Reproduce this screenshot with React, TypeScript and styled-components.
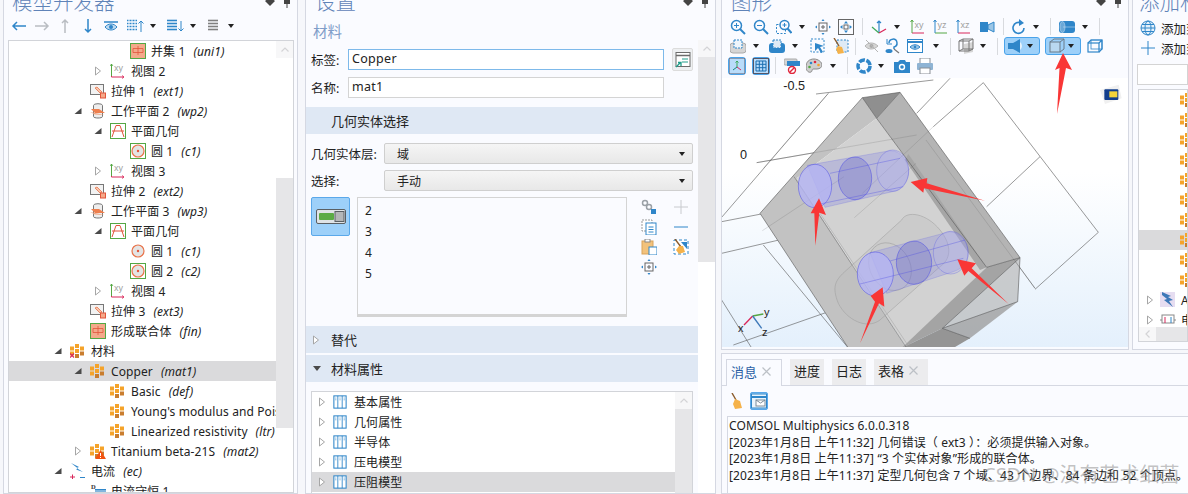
import React from 'react'
import styled, { createGlobalStyle } from 'styled-components'

const GlobalStyle = createGlobalStyle`
  html, body {
    margin: 0;
    padding: 0;
    background: #f6f7fb;
    overflow: hidden;
  }
  * { box-sizing: border-box; }
`

const blue = '#2f86c9'
const grey = '#8a8f96'
const uiFont = `"Noto Sans", "Noto Sans CJK SC", sans-serif`

const Page = styled.div`
  width: 1188px;
  height: 494px;
  padding-left: 3px;
  display: grid;
  grid-template-columns: 295px 411px 1fr;
  column-gap: 7px;
  font-family: ${uiFont};
  font-size: 12px;
  color: #222;
  overflow: hidden;
`
const Panel = styled.section`
  position: relative;
  min-width: 0;
  background: #fafbff;
  border: 1px solid #d5d8e2;
  border-top: none;
  display: flex;
  flex-direction: column;
  overflow: hidden;
`
const TitleBar = styled.div<{ $left: number }>`
  height: 16px;
  flex: none;
  padding: 0 6px 0 ${(p) => p.$left}px;
  display: flex;
  align-items: flex-end;
  justify-content: space-between;
`
const Title = styled.div`
  font-size: 20.5px;
  line-height: 28px;
  color: #5f83b8;
  white-space: nowrap;
  font-weight: 300;
`
const PinBox = styled.div`
  display: flex;
  gap: 8px;
  height: 14px;
  align-self: flex-start;
`

function Pins() {
  return (
    <PinBox>
      <svg width="10" height="6" viewBox="0 0 10 6">
        <path d="M0 1 L5 6 L10 1 L5 -3Z" fill="#444" />
      </svg>
      <svg width="8" height="8" viewBox="0 0 8 8">
        <path d="M1 0h6v4H1zM3.500 4h1v4h-1z" fill="#444" />
      </svg>
    </PinBox>
  )
}

// ---------- icons ----------
const Ico = styled.svg`
  flex: none;
  display: block;
`
function I({ s = 16, children }: { s?: number; children: React.ReactNode }) {
  return (
    <Ico width={s} height={s} viewBox="0 0 16 16" fill="none">
      {children}
    </Ico>
  )
}

const CaretOpen = () => (
  <svg width="8" height="10" viewBox="0 0 8 10">
    <path d="M1.500 1 L6.500 5 L1.500 9Z" fill="#fff" stroke="#a6a6a6" />
  </svg>
)
const CaretDown = () => (
  <svg width="8" height="8" viewBox="0 0 8 8">
    <path d="M7.500 1 V7 H0.500Z" fill="#4a4a4a" />
  </svg>
)

const MatBlocks = () => (
  <g>
    <path d="M5 1h4v4H5zM0 3.500h4v4H0zM10 3.500h4v4h-4zM0 8.500h4v4H0zM5 6h4v4H5z" fill="#f5a32a" />
    <path d="M10 8.500h4v4h-4zM5 11h4v4H5z" fill="#c97d2e" />
  </g>
)
const IconMat = () => (
  <I>
    <MatBlocks />
  </I>
)
const IconMatX = () => (
  <I>
    <MatBlocks />
    <path d="M0 10.500l4 4M4 10.500l-4 4" stroke="#d9275a" strokeWidth="1.200" />
  </I>
)
const IconMatWarn = () => (
  <I>
    <MatBlocks />
    <path d="M10.500 7 L16 16 H5Z" fill="#f2520f" />
    <path d="M10.500 10v3M10.500 14v1" stroke="#fff" />
  </I>
)
const IconUnion = () => (
  <I>
    <rect x=".5" y=".5" width="15" height="15" fill="#f4a98a" stroke="#55a744" />
    <path d="M3 5.500h10v4H3zM8 3v9" stroke="#e2553a" strokeWidth=".8" />
  </I>
)
const IconView = () => (
  <I>
    <path d="M1.500 13v1H14" stroke="#d9275a" />
    <path d="M1.500 1v12" stroke="#55a744" />
    <path d="M0 3l1.500-2L3 3" stroke="#55a744" strokeWidth=".8" />
    <path d="M12 12.500l2 1.500-2 1.500" stroke="#d9275a" strokeWidth=".8" />
    <text x="4" y="8" fontSize="9" fill="#a0a0a0" fontFamily="Liberation Sans">
      xy
    </text>
  </I>
)
const IconExtrude = () => (
  <I>
    <rect x=".5" y="1.500" width="13" height="10" fill="#f2f2f2" stroke="#777" />
    <path d="M5 5 L10 10 L12 9 L7 4Z" fill="#f6c6ae" stroke="#e8734a" strokeWidth=".8" />
    <rect x="10.500" y="10" width="5" height="5" fill="#f4a98a" stroke="#e2553a" />
  </I>
)
const IconPlane = () => (
  <I>
    <ellipse cx="8" cy="2.500" rx="4.500" ry="1.800" fill="#eee" stroke="#777" />
    <path d="M3.500 2.500v11c0 2 9 2 9 0v-11" fill="#eee" stroke="#777" />
    <path d="M1 6h8l6 4H5Z" fill="#ee7f4e" />
    <path d="M0 9l10 2 4 1-9-.5Z" fill="#f2a47f" />
  </I>
)
const IconGeom = () => (
  <I>
    <rect x=".5" y=".5" width="15" height="15" fill="#fff" stroke="#55a744" />
    <path d="M2 14 L6 2.500h4L14 14M2 8h12" stroke="#e2553a" strokeWidth="1" />
  </I>
)
const IconCircleBare = () => (
  <I>
    <circle cx="8" cy="8" r="6" fill="#e4e4e4" stroke="#e8734a" strokeWidth="1.200" />
    <circle cx="8" cy="8" r="1.200" fill="#e2553a" />
  </I>
)
const IconCircle = () => (
  <I>
    <rect x=".5" y=".5" width="15" height="15" fill="#fff" stroke="#55a744" />
    <circle cx="8" cy="8" r="6" fill="#e4e4e4" stroke="#e8734a" strokeWidth="1.200" />
    <circle cx="8" cy="8" r="1.200" fill="#e2553a" />
  </I>
)
const IconEc = () => (
  <I>
    <path d="M1 0 L9 4 L6.500 5 L13 9 L6 6.500 L8 5.500Z" fill={blue} />
    <path d="M0 14h5M2.500 11.500v5" stroke="#d9275a" />
    <path d="M10 14.500h5" stroke={blue} />
  </I>
)
const IconCons = () => (
  <I>
    <path d="M5 6h11v10H0v-7h5Z" fill={blue} />
    <path d="M0 8h16" stroke="#fff" strokeWidth=".8" />
    <text x="1" y="6" fontSize="6.500" fontWeight="700" fill="#333" fontFamily="Liberation Serif">
      D
    </text>
  </I>
)
const IconTable = () => (
  <I s={14}>
    <rect x="1" y="1" width="14" height="14" fill="#fff" stroke={blue} strokeWidth="1.200" />
    <path d="M5.500 1v14M10.500 1v14" stroke={blue} />
    <path d="M3.200 3v3M8 3v3M12.800 3v3" stroke={blue} strokeDasharray="1 1" />
  </I>
)
const IconArrowBolt = () => (
  <I>
    <rect x="0" y="0" width="15" height="15" fill="#e6ddf1" />
    <path d="M2 0 L11 4 L8 5 L13 8 L9 9 L13 15 L4 8 L7 7 L2 3Z" fill="#3d78b8" />
  </I>
)
const IconDevice = () => (
  <I>
    <rect x="2" y="3" width="12" height="8" fill="#fff" stroke="#888" />
    <path d="M0 8h2M14 8h2" stroke="#888" />
    <path d="M5 5v6" stroke="#d9275a" />
    <path d="M11 5v6" stroke={blue} />
  </I>
)

// ---------- tree ----------
const TreeBox = styled.div`
  flex: 1;
  margin: 4px 3px 0 4px;
  min-height: 0;
  background: #fff;
  border: 1px solid #d2d4d9;
  display: flex;
  overflow: hidden;
`
const TreeRows = styled.div`
  flex: 1;
  min-width: 0;
  overflow: hidden;
`
const Row = styled.div<{ $selected?: boolean; $left: number }>`
  height: 20px;
  padding-left: ${(p) => p.$left}px;
  background: ${(p) => (p.$selected ? '#dadadc' : 'transparent')};
  display: flex;
  align-items: center;
  white-space: nowrap;
  overflow: hidden;
  letter-spacing: 0.1px;
`
const CaretSlot = styled.span<{ $w: number }>`
  flex: none;
  width: ${(p) => p.$w}px;
  display: flex;
  align-items: center;
`
const IconSlot = styled.span`
  flex: none;
  width: 21px;
`
const Tag = styled.i`
  margin-left: 8px;
`
const ScrollV = styled.div<{ $thumbTop: number; $thumbH: number }>`
  flex: none;
  width: 17px;
  background: linear-gradient(
    #fff ${(p) => p.$thumbTop}px,
    #e6e6e8 ${(p) => p.$thumbTop}px,
    #e6e6e8 ${(p) => p.$thumbTop + p.$thumbH}px,
    #fff ${(p) => p.$thumbTop + p.$thumbH}px
  );
`
const ScrollUp = styled.div`
  height: 17px;
  background: #f7f7f8;
  display: grid;
  place-items: center;
`
const Chevron = () => (
  <svg width="8" height="5" viewBox="0 0 8 5">
    <path d="M.5 4.500 L4 1 L7.500 4.500" fill="none" stroke="#d4d4d6" strokeWidth="1.200" />
  </svg>
)

type Node = {
  level: number
  caret?: 'open' | 'down'
  icon: React.ReactNode
  label: string
  tag?: string
  selected?: boolean
}
const modelTree: Node[] = [
  { level: 3, icon: <IconUnion />, label: '并集 1', tag: '(uni1)' },
  { level: 2, caret: 'open', icon: <IconView />, label: '视图 2' },
  { level: 1, icon: <IconExtrude />, label: '拉伸 1', tag: '(ext1)' },
  { level: 1, caret: 'down', icon: <IconPlane />, label: '工作平面 2', tag: '(wp2)' },
  { level: 2, caret: 'down', icon: <IconGeom />, label: '平面几何' },
  { level: 3, icon: <IconCircle />, label: '圆 1', tag: '(c1)' },
  { level: 2, caret: 'open', icon: <IconView />, label: '视图 3' },
  { level: 1, icon: <IconExtrude />, label: '拉伸 2', tag: '(ext2)' },
  { level: 1, caret: 'down', icon: <IconPlane />, label: '工作平面 3', tag: '(wp3)' },
  { level: 2, caret: 'down', icon: <IconGeom />, label: '平面几何' },
  { level: 3, icon: <IconCircleBare />, label: '圆 1', tag: '(c1)' },
  { level: 3, icon: <IconCircle />, label: '圆 2', tag: '(c2)' },
  { level: 2, caret: 'open', icon: <IconView />, label: '视图 4' },
  { level: 1, icon: <IconExtrude />, label: '拉伸 3', tag: '(ext3)' },
  { level: 1, icon: <IconUnion />, label: '形成联合体', tag: '(fin)' },
  { level: 0, caret: 'down', icon: <IconMatX />, label: '材料' },
  { level: 1, caret: 'down', icon: <IconMat />, label: 'Copper', tag: '(mat1)', selected: true },
  { level: 2, icon: <IconMat />, label: 'Basic', tag: '(def)' },
  { level: 2, icon: <IconMat />, label: "Young's modulus and Poisson's ratio", tag: '(enu)' },
  { level: 2, icon: <IconMat />, label: 'Linearized resistivity', tag: '(ltr)' },
  { level: 1, caret: 'open', icon: <IconMatWarn />, label: 'Titanium beta-21S', tag: '(mat2)' },
  { level: 0, caret: 'down', icon: <IconEc />, label: '电流', tag: '(ec)' },
  { level: 1, icon: <IconCons />, label: '电流守恒 1' },
]

// ---------- toolbars ----------
const ToolRow = styled.div<{ $pad: number; $h?: number }>`
  flex: none;
  height: ${(p) => p.$h ?? 19.5}px;
  padding-left: ${(p) => p.$pad}px;
  display: flex;
  align-items: center;
`
const Tool = styled.span<{ $w?: number; $active?: boolean; $end?: boolean; $ml?: number }>`
  flex: none;
  width: ${(p) => p.$w ?? 23}px;
  height: 18px;
  margin-left: ${(p) => p.$ml ?? 0}px;
  display: flex;
  align-items: center;
  justify-content: ${(p) => (p.$end ? 'flex-end' : 'center')};
  ${(p) => p.$active && `background:#9dd0f9;border:1px solid #4aa3ea;border-radius:3px;`}
`
const Sep = styled.span`
  flex: none;
  width: 1px;
  height: 17px;
  margin: 0 5.500px 0 4.500px;
  background: #d8dade;
`
const Drop = styled.span`
  flex: none;
  width: 0;
  height: 0;
  border: 3.500px solid transparent;
  border-top: 4px solid #222;
  border-bottom: none;
  margin: 0 6.500px 0 3.500px;
`
const DropEnd = styled(Drop)`
  margin: 0 3px 0 3px;
`

const Ar = ({ d, c }: { d: string; c: string }) => (
  <I>
    <path d={d} stroke={c} strokeWidth="1.500" />
  </I>
)
const IconEye = () => (
  <I>
    <path d="M1 4h14" stroke={blue} strokeWidth="1.500" />
    <path d="M2 9c3-4 9-4 12 0-3 4-9 4-12 0Z" fill="#bcd9f0" stroke={blue} />
    <circle cx="8" cy="9" r="2" fill={blue} />
  </I>
)
const ListIcon = ({ dir, c = blue, dash }: { dir?: 'up' | 'down'; c?: string; dash?: boolean }) => (
  <Ico width={dir ? 20 : 12} height="14" viewBox={dir ? '0 0 20 14' : '0 0 12 14'} fill="none">
    {[1.500, 4.500, 7.500, 10.500].map((y) => (
      <path key={y} d={`M1 ${y}h10`} stroke={c} strokeWidth="1.600" strokeDasharray={dash ? '1 .5' : undefined} />
    ))}
    {dir === 'up' && <path d="M15 13V2M12.500 4.500 15 2l2.500 2.500" stroke={blue} />}
    {dir === 'down' && <path d="M15 2v10M12.500 9.500 15 12l2.500-2.500" stroke={blue} />}
  </Ico>
)

const Lens = ({ sign }: { sign: '+' | '-' }) => (
  <I>
    <circle cx="6.500" cy="6.500" r="5" stroke={blue} strokeWidth="1.500" />
    <path d="M10 10l5 5" stroke={blue} strokeWidth="2" />
    <path d={sign === '+' ? 'M4 6.500h5M6.500 4v5' : 'M4 6.500h5'} stroke={blue} />
  </I>
)
const LensBox = () => (
  <I>
    <rect x=".5" y="5.500" width="9" height="9" stroke={blue} strokeDasharray="2 1.500" />
    <circle cx="8.500" cy="6" r="4.500" fill="#fafbff" stroke={blue} strokeWidth="1.500" />
    <path d="M11.500 9.500l4 4.500" stroke={blue} strokeWidth="2" />
    <path d="M6.500 6h4M8.500 4v4" stroke={blue} />
  </I>
)
const IconZoomSel = () => (
  <I>
    <rect x="4" y="4" width="8" height="8" stroke="#666" />
    <path d="M8 6v4M6 8h4" stroke="#666" />
    <path d="M8 0l-1.500 2h3ZM8 16l-1.500-2h3ZM0 8l2-1.500v3ZM16 8l-2-1.500v3Z" fill={blue} />
  </I>
)
const IconExtents = () => (
  <I>
    <rect x=".5" y=".5" width="15" height="15" stroke="#666" />
    <rect x="6" y="6" width="4" height="4" stroke="#666" />
    <path d="M8 2l-2 2.500h4ZM8 14l-2-2.500h4ZM2 8l2.500-2v4ZM14 8l-2.500-2v4Z" fill={blue} />
  </I>
)
const IconAxes = () => (
  <I>
    <path d="M8 14V2M6 4l2-2 2 2" stroke={blue} strokeWidth="1.200" />
    <path d="M8 14L1 8" stroke="#3da85a" strokeWidth="1.200" />
    <path d="M8 14l7-4" stroke="#d9275a" strokeWidth="1.200" />
  </I>
)
const IconPlaneAxes = ({ txt, c, up }: { txt: string; c: string; up: string }) => (
  <I>
    <path d="M2 14h12" stroke={c} />
    <path d="M2 1v13M.5 3 2 1l1.500 2" stroke={up} />
    <text x="4.500" y="9" fontSize="9" fill="#a0a0a0" fontFamily="Liberation Sans">
      {txt}
    </text>
  </I>
)
const IconCam = () => (
  <I>
    <rect x="1" y="3" width="8" height="10" fill={blue} />
    <path d="M9 6l6-3v10l-6-3Z" fill="#9cc6e6" stroke={blue} />
  </I>
)
const IconRotate = () => (
  <I>
    <path d="M13 9a5.500 5.500 0 1 1-3-5" stroke={blue} strokeWidth="1.600" />
    <path d="M8 0l5 4-5 3Z" fill={blue} />
  </I>
)
const IconCyl = () => (
  <I>
    <rect x="0" y="2" width="16" height="12" rx="3" fill={blue} />
    <ellipse cx="3.500" cy="8" rx="2.500" ry="5.500" fill="#6aa8d8" stroke="#bcd9f0" strokeWidth=".6" />
    <path d="M4 8h12" stroke="#bcd9f0" strokeWidth=".6" />
  </I>
)
const IconPad = () => (
  <I>
    <rect x="0" y="5" width="16" height="10" rx="3" fill="#d5d5d5" stroke="#aaa" />
    <rect x="4" y="2" width="8" height="8" fill="#eef5fb" stroke={blue} strokeDasharray="2 1" />
  </I>
)
const IconPadBlue = () => (
  <I>
    <rect x="0" y="5" width="16" height="10" rx="3" fill={blue} />
    <rect x="4" y="2" width="8" height="8" fill="#dfeaf5" stroke={blue} strokeDasharray="2 1" />
  </I>
)
const IconSelCursor = () => (
  <I>
    <rect x="1" y="1" width="13" height="13" stroke={blue} strokeDasharray="2 1.500" />
    <path d="M5 5l9 3-4 1 3 5-2 1-3-5-3 3Z" fill={blue} />
  </I>
)
const IconBroomBox = () => (
  <I>
    <rect x="4" y="2" width="11" height="12" fill="#dfeaf5" stroke={blue} strokeDasharray="2 1.500" />
    <path d="M1 0l5 8" stroke="#8a5a2b" strokeWidth="1.400" />
    <path d="M5 8l-2 3 2 5 6-1-2-6Z" fill="#f5b24a" />
  </I>
)
const IconHide = () => (
  <I>
    <path d="M1 8c3-4 9-4 13 0-4 4-10 4-13 0Z" fill="#d5d5d5" stroke="#b5b5b5" />
    <circle cx="7.500" cy="8" r="2" fill="#aaa" />
    <path d="M2 2l12 12" stroke="#b5b5b5" />
  </I>
)
const IconReset = () => (
  <I>
    <path d="M5 5a4 4 0 1 1 5 4V11" stroke={blue} strokeWidth="1.500" />
    <path d="M3 1v5h5" stroke={blue} />
    <ellipse cx="5" cy="13" rx="3.500" ry="2" fill={blue} />
    <path d="M10 11l5 4" stroke="#777" strokeWidth="1.200" />
  </I>
)
const IconEyeWin = () => (
  <I>
    <rect x=".5" y="1.500" width="15" height="13" fill="#fff" stroke={blue} />
    <path d="M1 4h14" stroke={blue} strokeWidth="2" />
    <path d="M3 9c3-3 7-3 10 0-3 3-7 3-10 0Z" fill="#9cc6e6" stroke={blue} />
    <circle cx="8" cy="9" r="1.300" fill={blue} />
  </I>
)
const IconWire = () => (
  <I>
    <path d="M6 6l9-2v10l-9 2Z" fill="#d6d6d6" />
    <path d="M1 3h10v10H1ZM5 1h10v10H5ZM1 3l4-2M11 3l4-2M1 13l4-2M11 13l4-2" stroke="#777" />
  </I>
)
const IconLight = () => (
  <I>
    <path d="M0 5h5l7-4v14l-7-4H0Z" fill={blue} />
    <path d="M12 4a5 5 0 0 1 0 8Z" fill="#e6f2fb" />
  </I>
)
const IconBox = () => (
  <I>
    <rect x="1" y="4" width="10" height="10" fill="#b9d8f0" stroke="#6a7a88" />
    <path d="M1 4l4-3h10v10l-4 3M11 4l4-3" stroke="#6a7a88" />
  </I>
)
const IconBoxWire = () => (
  <I>
    <rect x="1" y="5" width="11" height="9" stroke={blue} strokeWidth="1.200" />
    <path d="M1 5l3-3h11v9l-3 3M12 5l3-3" stroke={blue} strokeWidth="1.200" />
    <rect x="4" y="2" width="11" height="9" stroke={blue} strokeWidth=".8" />
  </I>
)
const IconTriad = () => (
  <I>
    <rect x="0" y="0" width="16" height="16" stroke="#556" fill="#b9dcfa" />
    <path d="M8 9V3M6.500 4.500 8 3l1.500 1.500" stroke="#3da85a" />
    <path d="M8 9l4 3" stroke="#d9275a" />
    <path d="M8 9l-4 3" stroke="#17867c" />
  </I>
)
const IconGrid = () => (
  <I>
    <rect x=".5" y=".5" width="15" height="15" stroke="#556" fill="#b9dcfa" />
    <path d="M3 3h10v10H3ZM6.300 3v10M9.700 3v10M3 6.300h10M3 9.700h10" stroke="#1b6eb0" />
  </I>
)
const IconNoHide = () => (
  <I>
    <rect x="0" y="1" width="13" height="6" rx="1" fill="#d5d5d5" stroke="#aaa" />
    <rect x="3" y="3" width="13" height="5" fill={blue} />
    <circle cx="8" cy="12" r="3.500" fill="#fff" stroke="#e0263c" strokeWidth="1.400" />
    <path d="M5.500 14.500l5-5" stroke="#e0263c" strokeWidth="1.400" />
  </I>
)
const IconPalette = () => (
  <I>
    <path d="M8 1C3 1 0 4 0 9c0 4 3 6 5 5 2-1 0-3 3-3h3c3 0 5-2 5-4 0-3-4-6-8-6Z" fill="#cfcfcf" stroke="#888" />
    <circle cx="5" cy="5" r="1.300" fill={blue} />
    <circle cx="9" cy="4" r="1.300" fill="#e0263c" />
    <circle cx="12.500" cy="7" r="1.300" fill="#f5a32a" />
    <circle cx="3.500" cy="9" r="1.300" fill="#55a744" />
  </I>
)
const IconAperture = () => (
  <I>
    <circle cx="8" cy="8" r="6" stroke={blue} strokeWidth="3.500" strokeDasharray="6 1.500" />
  </I>
)
const IconCamera = () => (
  <I>
    <path d="M0 4h4l2-2h5l1 2h4v11H0Z" fill={blue} />
    <circle cx="8" cy="9" r="3.200" fill="#fff" />
    <circle cx="8" cy="9" r="1.800" fill={blue} />
  </I>
)
const IconPrinter = () => (
  <I>
    <rect x="3" y="0" width="10" height="6" fill="#fff" stroke={grey} />
    <rect x="0" y="5" width="16" height="7" rx="1" fill="#8fb4d4" />
    <rect x="3" y="10" width="10" height="6" fill="#fff" stroke={grey} />
  </I>
)

// ---------- settings ----------
const SubTitle = styled.div`
  height: 32px;
  padding: 3px 0 0 7px;
  font-size: 14.500px;
  line-height: 24px;
  color: #7f9dc9;
`
const SettingsBody = styled.div`
  flex: 1;
  display: flex;
  min-height: 0;
`
const SettingsMain = styled.div`
  flex: 1;
  min-width: 0;
`
const FormRow = styled.div<{ $mb?: number; $mt?: number }>`
  display: flex;
  align-items: center;
  padding-left: 5px;
  margin-top: ${(p) => p.$mt ?? 0}px;
  margin-bottom: ${(p) => p.$mb ?? 0}px;
`
const FieldLabel = styled.label<{ $w: number }>`
  flex: none;
  width: ${(p) => p.$w}px;
  font-size: 12.500px;
`
const TextField = styled.div<{ $focus?: boolean }>`
  width: 316px;
  height: 21px;
  padding-left: 3px;
  background: #fff;
  border: 1px solid ${(p) => (p.$focus ? '#7db9ea' : '#d4d4d4')};
  font-size: 12.500px;
  line-height: 18px;
  letter-spacing: 0.3px;
`
const SquareBtn = styled.div`
  width: 21px;
  height: 23px;
  margin-left: 8px;
  background: #eef0f2;
  border: 1px solid #dcdcdc;
  border-radius: 2px;
  display: grid;
  place-items: center;
`
const Section = styled.div<{ $mt?: number; $pad?: number }>`
  height: 27px;
  margin-top: ${(p) => p.$mt ?? 0}px;
  padding-left: ${(p) => p.$pad ?? 25}px;
  background: #dfe8f4;
  display: flex;
  align-items: center;
  font-size: 13px;
`
const SectionCaret = styled.span`
  width: 25px;
  display: flex;
  padding-left: 6px;
`
const Select = styled.div`
  width: 309px;
  height: 21px;
  padding: 0 4px 0 12px;
  background: linear-gradient(#f5f5f5, #e8e8e8);
  border: 1px solid #cfcfcf;
  border-radius: 2px;
  display: flex;
  align-items: center;
  justify-content: space-between;
`
const SelectRows = styled.div`
  padding-top: 9px;
  display: flex;
  flex-direction: column;
  gap: 6px;
`
const PickArea = styled.div`
  margin-top: 6px;
  padding-left: 5px;
  display: flex;
`
const ToggleBtn = styled.div`
  flex: none;
  width: 39px;
  height: 39px;
  background: #9dd0f9;
  border: 1px solid #5aa8ea;
  border-radius: 2px;
  display: grid;
  place-items: center;
`
const IdList = styled.div`
  width: 270px;
  height: 120px;
  margin-left: 7px;
  padding: 2px 0 0 7px;
  background: #fafbff;
  border: 1px solid #d4d4d4;
  border-bottom-width: 3px;
`
const IdRow = styled.div`
  height: 21px;
  line-height: 21px;
`
const SideTools = styled.div`
  margin-left: 14px;
  display: grid;
  grid-template-columns: 16px 16px;
  grid-auto-rows: 20px;
  column-gap: 16px;
  align-items: center;
`
const PropBox = styled.div`
  height: 120px;
  margin: 9px 5px 0 5px;
  background: #fff;
  border: 1px solid #d2d4d9;
  display: flex;
  overflow: hidden;
`
const PropLabel = styled.span`
  margin-left: 7px;
`
const SettingsScroll = styled.div`
  flex: none;
  width: 17px;
  margin-top: 24px;
  background: linear-gradient(#e6e6e8 222px, #fff 222px);
`

const IconLink = () => (
  <I>
    <circle cx="4" cy="4" r="2.500" stroke="#9aa0a6" strokeWidth="1.500" />
    <circle cx="8" cy="8" r="2.500" stroke="#9aa0a6" strokeWidth="1.500" />
    <rect x="10" y="10" width="5" height="5" fill={blue} />
  </I>
)
const IconPlus = ({ c = '#c8cace' }: { c?: string }) => (
  <I>
    <path d="M8 1v14M1 8h14" stroke={c} />
  </I>
)
const IconMinus = () => (
  <I>
    <path d="M1 8h14" stroke={blue} />
  </I>
)
const IconCopy = () => (
  <I>
    <rect x="1" y="1" width="10" height="11" fill="#fff" stroke="#999" strokeDasharray="2 1" />
    <rect x="5" y="4" width="10" height="12" fill="#fff" stroke={blue} />
    <path d="M7.500 8h5M7.500 10.500h5M7.500 13h5" stroke={blue} />
  </I>
)
const IconPaste = () => (
  <I>
    <rect x="1" y="2" width="11" height="13" fill="#f2c27c" stroke="#d9a35a" />
    <rect x="4" y="0" width="5" height="3" fill="#fff" stroke="#888" />
    <rect x="8" y="8" width="8" height="8" fill="#fff" stroke={blue} />
  </I>
)
const IconBroomSel = () => (
  <I>
    <rect x="1" y="1" width="14" height="14" fill="#fff" stroke={blue} strokeDasharray="3 2" />
    <path d="M2 0l6 8" stroke="#8a5a2b" strokeWidth="1.400" />
    <path d="M6 7l-3 4 3 4 6-2-2-6Z" fill="#f5b24a" />
    <path d="M8 3h6v7Z" fill={blue} />
  </I>
)
const IconToggle = () => (
  <svg width="30" height="15" viewBox="0 0 30 15">
    <rect x=".5" y=".5" width="29" height="14" rx="1.500" fill="#dfe3e6" stroke="#5a5f63" />
    <rect x="3" y="4" width="15" height="7" rx="1" fill="#5cab45" />
    <rect x="19" y="2.500" width="9" height="10" fill="#b4b6b8" stroke="#5a5f63" />
  </svg>
)
const IconPanelBtn = () => (
  <svg width="16" height="16" viewBox="0 0 16 16" fill="none">
    <rect x="1" y=".5" width="14" height="14" fill="#fff" stroke="#6b6b6b" />
    <path d="M1 3.500h14" stroke="#6b6b6b" strokeWidth="1.500" />
    <path d="M7 7h6M7 10h6" stroke="#1f9d8a" />
    <path d="M1 15l4-4M3 10.500h3V14" stroke="#1f9d8a" strokeWidth="1.300" />
  </svg>
)

// ---------- graphics ----------
const GraphicsColumn = styled.div`
  min-width: 0;
  display: grid;
  grid-template-rows: 349px 1fr;
  row-gap: 4px;
  margin-left: -2px;
  overflow: hidden;
`
const TopRow = styled.div`
  min-height: 0;
  display: grid;
  grid-template-columns: 408px 1fr;
  column-gap: 3px;
`
const GraphPanel = styled(Panel)`
  overflow: visible;
`
const Toolbars = styled.div`
  padding-top: 1px;
  margin-bottom: 2.500px;
`
const Canvas = styled.div`
  flex: 1;
  min-height: 0;
  margin-bottom: 2px;
  background: linear-gradient(#fff 35%, #e4f0fc);
  overflow: hidden;
`
const Drawing = styled.svg`
  display: block;
  width: 406px;
  height: 269px;
`
const NoteArrow = styled.svg`
  position: absolute;
  left: 326px;
  top: 50px;
`

function Scene() {
  const edge = '#555'
  const blueEdge = '#4a4ae6'
  return (
    <Drawing viewBox="6 -6 1218 807" fill="none">
      {/* grid lines behind the part */}
      <g stroke={edge} strokeWidth="1.800">
        <path d="M288 42 L640 0M325 40 L5 412M690 -5 L590 100M790 8 L1135 457 L945 628M790 8 L640 140M110 248 L590 165" />
        <path d="M5 425 L470 335M5 520 L370 435M130 495 L385 804M5 660 L95 804M40 795 L340 690M960 230 L800 380M620 180 L945 625" />
      </g>
      {/* block faces */}
      <path d="M427 53 L120 400 L385 804 L560 804 L230 295 L470 115Z" fill="#c2c2c2" />
      <path d="M470 115 L230 295 L560 804 L800 562Z" fill="#d2d2d2" />
      <path d="M427 53 L540 37 L470 115Z" fill="#8f8f8f" />
      <path d="M540 37 L900 533 L800 562 L470 115Z" fill="#b4b4b4" />
      <path d="M800 562 L900 533 L667 745 L545 804Z" fill="#a4a4a4" />
      <path d="M900 533 L893 665 L667 745Z" fill="#b4b4b4" fillOpacity=".65" />
      <path d="M667 745 L893 665 L750 775Z" fill="#9e9e9e" fillOpacity=".8" />
      <path d="M667 745 L545 804 L700 804 L750 775Z" fill="#959595" />
      <path d="M565 222 L800 562 L780 570 L555 240Z" fill="#a6a6a6" />
      {/* grid lines seen through the part */}
      <g stroke={edge} strokeWidth="1.800" strokeOpacity=".3">
        <path d="M325 40 L130 265M110 248 L590 165M127 452 L372 290M403 413 L588 250M640 140 L427 340M618 180 L945 625M300 400 L560 790" />
      </g>
      <g stroke={edge} strokeWidth="1.800">
        <path d="M427 53 L120 400 L385 804M427 53 L540 37 L900 533 L893 665 L667 745 L900 533M470 115 L427 53M540 37 L470 115M800 562 L900 533M470 115 L800 562M667 745 L750 775" />
        <path d="M222 290 L560 804" strokeOpacity=".7" />
      </g>
      {/* ghost cylinder below */}
      <g stroke="#9a9a9a" strokeWidth="1.500" fill="#bdbdbd" fillOpacity=".3">
        <path d="M545 420 C560 390 620 400 660 450 C700 500 690 540 660 560 L480 720 C440 750 380 720 355 670 C335 620 345 600 380 570Z" />
        <ellipse cx="510" cy="560" rx="60" ry="75" transform="rotate(-30 510 560)" fillOpacity="0" />
      </g>
      {/* cylinders */}
      <g stroke={blueEdge} strokeWidth="1.500">
        <path d="M262 256 L510 212 C545 210 566 250 566 275 C566 300 550 322 530 332 L315 382Z" fill="#7f7fe6" fillOpacity=".28" strokeOpacity=".4" />
        <ellipse cx="405" cy="295" rx="50" ry="64" fill="#6c6cc8" fillOpacity=".35" />
        <ellipse cx="518" cy="272" rx="48" ry="62" fill="#b4b4f4" fillOpacity=".3" strokeOpacity=".55" />
        <ellipse cx="285" cy="318" rx="50" ry="65" fill="#b4b4f4" fillOpacity=".8" />
        <path d="M330 280 L540 235M300 372 L550 320" strokeOpacity=".7" />
        <path d="M450 518 L690 455 C730 460 745 495 745 520 C745 545 730 565 700 575 L500 640Z" fill="#7f7fe6" fillOpacity=".26" strokeOpacity=".4" />
        <ellipse cx="582" cy="548" rx="53" ry="65" fill="#6c6cc8" fillOpacity=".35" />
        <ellipse cx="692" cy="518" rx="52" ry="64" fill="#b4b4f4" fillOpacity=".25" strokeOpacity=".55" />
        <ellipse cx="466" cy="582" rx="54" ry="66" fill="#b4b4f4" fillOpacity=".8" />
        <path d="M510 543 L735 480M420 612 L730 535" strokeOpacity=".7" />
      </g>
      {/* red notes */}
      <g fill="#f93636">
        <path d="M572 306 L622 294 L620 310 L795 362 L612 325 L610 338Z" />
        <path d="M297 355 L318 405 L298 398 L286 497 L283 400 L272 400Z" />
        <path d="M712 538 L768 550 L755 565 L866 672 L745 573 L733 587Z" />
        <path d="M488 622 L493 680 L477 670 L420 790 L465 665 L452 648Z" />
      </g>
      {/* axis numbers and triad */}
      <g fontFamily="Liberation Sans" fill="#222" fontSize="38">
        <text x="190" y="30">-0.5</text>
        <text x="60" y="237">0</text>
      </g>
      <g strokeWidth="4">
        <path d="M98 708 L130 702" stroke="#55a744" />
        <path d="M98 708 L72 735" stroke="#d9275a" />
        <path d="M98 708 L125 745" stroke="#3d78b8" />
      </g>
      <g fontFamily="Liberation Sans" fill="#222" fontSize="33">
        <text x="132" y="708">y</text>
        <text x="54" y="757">x</text>
        <text x="126" y="769">z</text>
      </g>
      {/* small logo */}
      <path d="M1140 30 L1196 14 L1205 55 L1155 72Z" fill="#f0f0f0" />
      <rect x="1153" y="28" width="42" height="32" rx="3" fill="#123e8c" />
      <path d="M1168 34 L1192 34 L1192 52 L1168 52Z" fill="#f4d43a" />
    </Drawing>
  )
}

// ---------- messages ----------
const BottomPanel = styled(Panel)`
  padding-top: 5px;
  border-right: none;
  border-top: 1px solid #d5d8e2;
`
const TabBar = styled.div`
  flex: none;
  height: 27px;
  padding-left: 4px;
  display: flex;
  gap: 8px;
  border-bottom: 1px solid #d5d8e2;
`
const Tab = styled.div<{ $active?: boolean; $w: number }>`
  width: ${(p) => p.$w}px;
  height: ${(p) => (p.$active ? 27 : 26)}px;
  padding: 0 0 3px 4px;
  background: ${(p) => (p.$active ? '#fafbff' : '#ececee')};
  border: ${(p) => (p.$active ? '1px solid #d5d8e2' : 'none')};
  border-bottom: none;
  color: ${(p) => (p.$active ? '#2a5fa5' : '#222')};
  display: flex;
  align-items: center;
  gap: 5px;
  font-size: 13px;
`
const MsgTools = styled.div`
  flex: none;
  height: 30px;
  padding-left: 9px;
  display: flex;
  align-items: center;
  gap: 7px;
`
const MsgBtn = styled.div`
  width: 18px;
  height: 18px;
  background: #9dd0f9;
  border: 1px solid #5aa8ea;
  border-radius: 2px;
  display: grid;
  place-items: center;
`
const MsgBox = styled.div`
  position: relative;
  flex: 1;
  margin-left: 5px;
  padding: 1px 0 0 1px;
  background: #fcfdff;
  border-top: 1px solid #d5d8e2;
  border-left: 1px solid #d5d8e2;
  line-height: 16.600px;
  letter-spacing: 0.12px;
  white-space: nowrap;
  overflow: hidden;
`
const Watermark = styled.div`
  position: absolute;
  left: 255px;
  top: 46px;
  font-size: 20px;
  line-height: 24px;
  letter-spacing: 0;
  color: rgba(120, 120, 120, 0.45);
`

const TabClose = () => (
  <svg width="9" height="9" viewBox="0 0 9 9">
    <path d="M.5.5l8 8M8.500.5l-8 8" stroke="#bcc0c6" strokeWidth="1.200" />
  </svg>
)
const IconBroom = () => (
  <svg width="12" height="16" viewBox="0 0 12 16" fill="none">
    <path d="M1 0l4 7" stroke="#8a5a2b" strokeWidth="1.400" />
    <path d="M4 6L2 11l2 5 7-1-2-7Z" fill="#f5b24a" />
  </svg>
)
const IconMail = () => (
  <I>
    <rect x=".5" y="1" width="15" height="14" fill="#eaf4fc" stroke={blue} />
    <path d="M.5 4h15" stroke={blue} strokeWidth="2" />
    <rect x="5" y="7" width="9" height="6" fill="#fff" stroke="#7a8a98" />
    <path d="M5 7l4.500 3L14 7" stroke="#7a8a98" />
  </I>
)

// ---------- add material ----------
const AddLine = styled.div<{ $mt?: number }>`
  height: 20px;
  margin-top: ${(p) => p.$mt ?? 0}px;
  padding-left: 7px;
  display: flex;
  align-items: center;
  gap: 5px;
  white-space: nowrap;
  font-size: 12.500px;
`
const SearchBox = styled.div`
  height: 21px;
  margin: 6px 0 4px 4px;
  background: #fff;
  border: 1px solid #d4d4d4;
`
const AddTree = styled.div`
  flex: 1;
  margin: 0 0 7px 5px;
  background: #fff;
  border: 1px solid #d2d4d9;
  display: flex;
  flex-direction: column;
  overflow: hidden;
`
const ScrollH = styled.div`
  flex: none;
  height: 14px;
  background: #e6e6e8;
`
const ScrollLeft = styled.div`
  width: 17px;
  height: 14px;
  background: #f7f7f8;
  display: grid;
  place-items: center;
`
const RightPanel = styled(Panel)`
  border-right: none;
`

const IconGlobe = () => (
  <I>
    <circle cx="8" cy="8" r="7" stroke={blue} fill="#e3f0fa" />
    <ellipse cx="8" cy="8" rx="3" ry="7" stroke={blue} />
    <path d="M1 8h14M2 4.500h12M2 11.500h12" stroke={blue} />
  </I>
)

function TreeRow({ n }: { n: Node }) {
  return (
    <Row $left={45 + n.level * 20} $selected={n.selected}>
      <CaretSlot $w={16}>
        {n.caret === 'open' && <CaretOpen />}
        {n.caret === 'down' && <CaretDown />}
      </CaretSlot>
      <IconSlot>{n.icon}</IconSlot>
      {n.label}
      {n.tag && <Tag>{n.tag}</Tag>}
    </Row>
  )
}

export default function App() {
  return (
    <Page>
      <GlobalStyle />

      <Panel>
        <TitleBar $left={8}>
          <Title>模型开发器</Title>
          <Pins />
        </TitleBar>
        <ToolRow $pad={3} $h={20}>
          <Tool>
            <Ar d="M15 8H2M6 4 2 8l4 4" c={blue} />
          </Tool>
          <Tool>
            <Ar d="M1 8h13M10 4l4 4-4 4" c="#b9bdc2" />
          </Tool>
          <Tool>
            <Ar d="M8 15V2M5 5l3-3 3 3" c="#b9bdc2" />
          </Tool>
          <Tool>
            <Ar d="M8 1v13M5 11l3 3 3-3" c={blue} />
          </Tool>
          <Tool>
            <IconEye />
          </Tool>
          <Tool $w={24} $end>
            <ListIcon dir="up" dash />
          </Tool>
          <Drop />
          <Tool $w={24} $end>
            <ListIcon dir="down" />
          </Tool>
          <Drop />
          <Tool $w={22}>
            <ListIcon c="#808080" />
          </Tool>
          <Drop />
        </ToolRow>
        <TreeBox>
          <TreeRows>
            {modelTree.map((n, i) => (
              <TreeRow key={i} n={n} />
            ))}
          </TreeRows>
          <ScrollV $thumbTop={137} $thumbH={250}>
            <ScrollUp>
              <Chevron />
            </ScrollUp>
          </ScrollV>
        </TreeBox>
      </Panel>

      <Panel>
        <TitleBar $left={9}>
          <Title>设置</Title>
          <Pins />
        </TitleBar>
        <SettingsBody>
          <SettingsMain>
            <SubTitle>材料</SubTitle>
            <FormRow>
              <FieldLabel $w={37}>标签:</FieldLabel>
              <TextField $focus>Copper</TextField>
              <SquareBtn>
                <IconPanelBtn />
              </SquareBtn>
            </FormRow>
            <FormRow $mt={6} $mb={9}>
              <FieldLabel $w={37}>名称:</FieldLabel>
              <TextField>mat1</TextField>
            </FormRow>
            <Section>几何实体选择</Section>
            <SelectRows>
              <FormRow>
                <FieldLabel $w={73}>几何实体层:</FieldLabel>
                <Select>
                  域
                  <DropEnd />
                </Select>
              </FormRow>
              <FormRow>
                <FieldLabel $w={73}>选择:</FieldLabel>
                <Select>
                  手动
                  <DropEnd />
                </Select>
              </FormRow>
            </SelectRows>
            <PickArea>
              <ToggleBtn>
                <IconToggle />
              </ToggleBtn>
              <IdList>
                <IdRow>2</IdRow>
                <IdRow>3</IdRow>
                <IdRow>4</IdRow>
                <IdRow>5</IdRow>
              </IdList>
              <SideTools>
                <IconLink />
                <IconPlus />
                <IconCopy />
                <IconMinus />
                <IconPaste />
                <IconBroomSel />
                <IconZoomSel />
              </SideTools>
            </PickArea>
            <Section $mt={9} $pad={0}>
              <SectionCaret>
                <CaretOpen />
              </SectionCaret>
              替代
            </Section>
            <Section $mt={2} $pad={0}>
              <SectionCaret>
                <svg width="10" height="6" viewBox="0 0 10 6">
                  <path d="M1 0h8L5 5Z" fill="#4a4a4a" />
                </svg>
              </SectionCaret>
              材料属性
            </Section>
            <PropBox>
              <TreeRows>
                {['基本属性', '几何属性', '半导体', '压电模型', '压阻模型'].map((t) => (
                  <Row key={t} $left={6} $selected={t === '压阻模型'}>
                    <CaretSlot $w={15}>
                      <CaretOpen />
                    </CaretSlot>
                    <IconTable />
                    <PropLabel>{t}</PropLabel>
                  </Row>
                ))}
              </TreeRows>
              <ScrollV $thumbTop={17} $thumbH={120}>
                <ScrollUp>
                  <Chevron />
                </ScrollUp>
              </ScrollV>
            </PropBox>
          </SettingsMain>
          <SettingsScroll>
            <ScrollUp>
              <Chevron />
            </ScrollUp>
          </SettingsScroll>
        </SettingsBody>
      </Panel>

      <GraphicsColumn>
        <TopRow>
          <GraphPanel>
            <TitleBar $left={9}>
              <Title>图形</Title>
              <Pins />
            </TitleBar>
            <Toolbars>
              <ToolRow $pad={4}>
                <Tool><Lens sign="+" /></Tool>
                <Tool><Lens sign="-" /></Tool>
                <Tool><LensBox /></Tool>
                <Drop />
                <Tool><IconZoomSel /></Tool>
                <Tool><IconExtents /></Tool>
                <Sep />
                <Tool $w={22}><IconAxes /></Tool>
                <Drop />
                <Tool><IconPlaneAxes txt="xy" c="#d9275a" up="#55a744" /></Tool>
                <Tool><IconPlaneAxes txt="yz" c="#55a744" up={blue} /></Tool>
                <Tool><IconPlaneAxes txt="xz" c="#d9275a" up={blue} /></Tool>
                <Tool><IconCam /></Tool>
                <Sep />
                <Tool $w={20}><IconRotate /></Tool>
                <Drop />
                <Sep />
                <Tool $w={22}><IconCyl /></Tool>
                <Drop />
                <Sep />
              </ToolRow>
              <ToolRow $pad={4}>
                <Tool><IconPad /></Tool>
                <Drop />
                <Tool><IconPadBlue /></Tool>
                <Drop />
                <Tool $w={27}><IconSelCursor /></Tool>
                <Tool $w={19}><IconBroomBox /></Tool>
                <Sep />
                <Tool $w={21}><IconHide /></Tool>
                <Tool $w={19}><IconReset /></Tool>
                <Tool $w={28}><IconEyeWin /></Tool>
                <Drop />
                <Sep />
                <Tool $w={20}><IconWire /></Tool>
                <Drop />
                <Sep />
                <Tool $w={36} $active $ml={1}>
                  <IconLight />
                  <DropEnd />
                </Tool>
                <Tool $w={36} $active $ml={5}>
                  <IconBox />
                  <DropEnd />
                </Tool>
                <Tool $w={28}><IconBoxWire /></Tool>
              </ToolRow>
              <ToolRow $pad={4}>
                <Tool $w={18} $active $ml={2}><IconTriad /></Tool>
                <Tool $w={18} $active $ml={6}><IconGrid /></Tool>
                <Sep />
                <Tool $w={21}><IconNoHide /></Tool>
                <Tool $w={24}><IconPalette /></Tool>
                <Drop />
                <Sep />
                <Tool $w={21}><IconAperture /></Tool>
                <Drop />
                <Tool><IconCamera /></Tool>
                <Tool><IconPrinter /></Tool>
              </ToolRow>
            </Toolbars>
            <Canvas>
              <Scene />
            </Canvas>
            <NoteArrow width="26" height="66" viewBox="0 0 26 66">
              <path d="M15 3 L24 20 L18 18 L9 64 L11.500 18 L7 20Z" fill="#f93636" />
            </NoteArrow>
          </GraphPanel>

          <RightPanel>
            <TitleBar $left={6}>
              <Title>添加材料</Title>
            </TitleBar>
            <AddLine $mt={2}>
              <IconGlobe />
              添加到组件
            </AddLine>
            <AddLine>
              <IconPlus c={blue} />
              添加到全局
            </AddLine>
            <SearchBox />
            <AddTree>
              <TreeRows>
                {Array.from({ length: 10 }, (_, i) => (
                  <Row key={i} $left={41} $selected={i === 7}>
                    <IconMat />
                  </Row>
                ))}
                <Row $left={7}>
                  <CaretSlot $w={14}>
                    <CaretOpen />
                  </CaretSlot>
                  <IconSlot><IconArrowBolt /></IconSlot>
                  AC/DC
                </Row>
                <Row $left={7}>
                  <CaretSlot $w={14}>
                    <CaretOpen />
                  </CaretSlot>
                  <IconSlot><IconDevice /></IconSlot>
                  电池
                </Row>
              </TreeRows>
              <ScrollH>
                <ScrollLeft>
                  <svg width="5" height="8" viewBox="0 0 5 8">
                    <path d="M4.500.5 1 4l3.500 3.500" fill="none" stroke="#d4d4d6" strokeWidth="1.200" />
                  </svg>
                </ScrollLeft>
              </ScrollH>
            </AddTree>
          </RightPanel>
        </TopRow>

        <BottomPanel>
          <TabBar>
            <Tab $active $w={56}>
              消息
              <TabClose />
            </Tab>
            <Tab $w={34}>进度</Tab>
            <Tab $w={34}>日志</Tab>
            <Tab $w={54}>
              表格
              <TabClose />
            </Tab>
          </TabBar>
          <MsgTools>
            <IconBroom />
            <MsgBtn>
              <IconMail />
            </MsgBtn>
          </MsgTools>
          <MsgBox>
            <div>COMSOL Multiphysics 6.0.0.318</div>
            <div>[2023年1月8日 上午11:32] 几何错误（ ext3 ）：必须提供输入对象。</div>
            <div>[2023年1月8日 上午11:37] “3 个实体对象”形成的联合体。</div>
            <div>[2023年1月8日 上午11:37] 定型几何包含 7 个域、43 个边界、84 条边和 52 个顶点。</div>
            <Watermark>CSDN @没有艺术细菌</Watermark>
          </MsgBox>
        </BottomPanel>
      </GraphicsColumn>
    </Page>
  )
}
